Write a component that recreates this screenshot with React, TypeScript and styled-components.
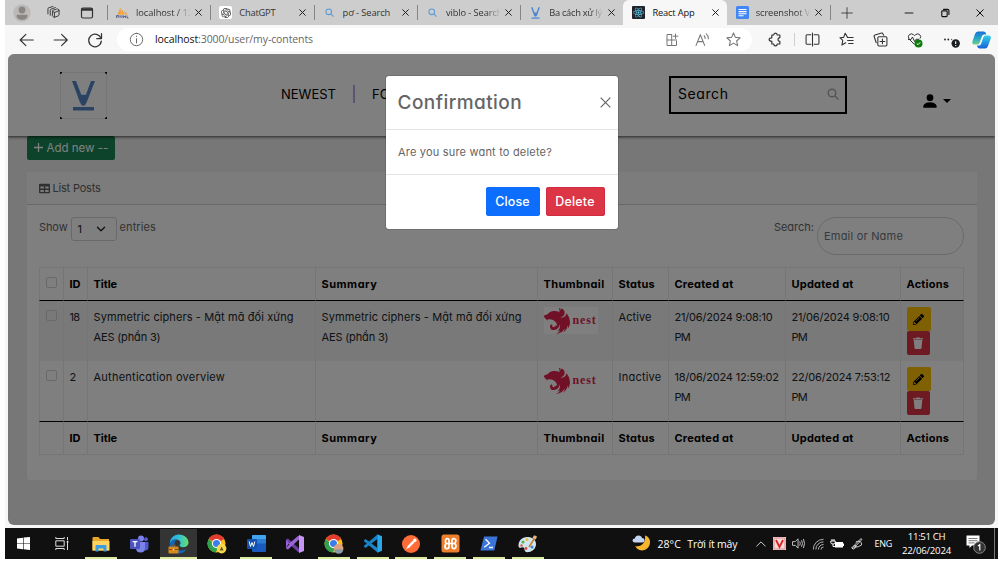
import React from 'react';
import styled, { createGlobalStyle } from 'styled-components';
import { FaTable, FaPencilAlt, FaReact } from 'react-icons/fa';
import { BsPersonFill } from 'react-icons/bs';
import { SiNestjs, SiOpenai } from 'react-icons/si';

const ui = `'Open Sans', 'Noto Sans', sans-serif`;
const body = `Inter, 'Liberation Sans', sans-serif`;

const GlobalStyle = createGlobalStyle`
  * { box-sizing: border-box; }
  body { margin: 0; background: #fff; font-family: ${body}; font-size: 11px; font-feature-settings: 'cv11'; }
  svg { display: block; flex: none; }
  button { font: inherit; border: 0; padding: 0; }
`;

const Screen = styled.div`
  width: 993px;
  height: 559px;
  margin-left: 5px;
  display: flex;
  flex-direction: column;
  background: #f7f7f7;
  overflow: hidden;
`;

const Label = styled.span<{ $ls?: number; $size?: number }>`
  letter-spacing: ${p => p.$ls ?? 0}px;
  ${p => p.$size && `font-size: ${p.$size}px;`}
  white-space: nowrap;
`;

/* ---------- Browser chrome ---------- */
const TabStrip = styled.div`
  flex: none;
  height: 25px;
  display: flex;
  background: #cdcdcd;
  font-family: ${ui};
  font-size: 9.3px;
  color: #2b2b2b;
`;
const StripTools = styled.div`
  width: 102px;
  display: grid;
  grid-template-columns: 33.5px 33px 14px;
  align-items: center;
  padding-left: 8px;
`;
const TabItem = styled.div<{ $active?: boolean; $line?: boolean }>`
  position: relative;
  width: 103.3px;
  display: flex;
  align-items: center;
  padding: 0 8px 0 9px;
  background: ${p => (p.$active ? '#f7f7f7' : 'transparent')};
  border-radius: 6px 6px 0 0;
  color: ${p => (p.$active ? '#111' : '#333')};
  &::before {
    content: '';
    position: absolute;
    left: 0;
    top: 5px;
    width: 1px;
    height: 15px;
    background: ${p => (p.$line ? '#858585' : 'transparent')};
  }
`;
const TabIcon = styled.span<{ $white?: boolean }>`
  flex: none;
  width: 13px;
  height: 13px;
  border-radius: 2px;
  display: grid;
  place-items: center;
  background: ${p => (p.$white ? '#fff' : 'transparent')};
`;
const TabTitle = styled.span<{ $ls: number; $fade?: boolean }>`
  flex: 1;
  margin: 0 3px 1px 7px;
  overflow: hidden;
  white-space: nowrap;
  letter-spacing: ${p => p.$ls}px;
  ${p => p.$fade && 'mask-image: linear-gradient(90deg, #000 72%, transparent 98%);'}
`;
const NewTab = styled.div`
  position: relative;
  display: flex;
  align-items: center;
  padding-left: 11px;
  flex: 1;
  &::before { content: ''; position: absolute; left: 0; top: 5px; width: 1px; height: 15px; background: #858585; }
`;
const WindowButtons = styled.div`
  display: flex;
  align-items: center;
  gap: 26px;
  padding-right: 14px;
`;
const Toolbar = styled.div`
  flex: none;
  height: 29px;
  display: flex;
  align-items: center;
  padding: 0 7px 0 14px;
`;
const NavButtons = styled.div`
  flex: none;
  display: flex;
  gap: 18px;
  width: 98px;
`;
const Address = styled.div`
  flex: none;
  width: 635px;
  height: 23px;
  border-radius: 12px;
  background: #fff;
  display: flex;
  align-items: center;
  padding: 0 11px 0 12px;
  gap: 16px;
  font-family: ${ui};
  font-size: 10.5px;
  color: #666;
  letter-spacing: -0.1px;
  b { font-weight: 400; color: #111; }
`;
const Url = styled.span`
  flex: 1;
  margin: 0 0 1px -5px;
`;
const ToolIcons = styled.div`
  display: grid;
  grid-template-columns: 27px 11px 34px 34px 34px 36px 29px 19px;
  align-items: center;
  padding-left: 14.5px;
`;
const Divider = styled.i`
  width: 1px;
  height: 13px;
  background: #cfcfcf;
`;

/* ---------- Web page ---------- */
const Viewport = styled.div`
  position: relative;
  flex: none;
  width: 987px;
  height: 471px;
  margin: 0 0 3px 3px;
  border-radius: 6px;
  overflow: hidden;
  background: #eee;
  color: #212529;
`;
const Navbar = styled.header`
  position: relative;
  height: 82px;
  display: flex;
  align-items: center;
  padding: 0 44px 0 52px;
  background: #fff;
  box-shadow: 0 1px 3px rgba(0, 0, 0, 0.7);
  color: #000;
  font-size: 14px;
`;
const Menu = styled.nav`
  display: flex;
  align-items: center;
  width: 388px;
  margin-left: 174px;
  padding-bottom: 2px;
`;
const MenuBar = styled.i`
  width: 2px;
  height: 18px;
  margin: 0 17px;
  background: #bda6e8;
`;
const SiteSearch = styled.div`
  width: 178px;
  height: 38px;
  border: 2px solid #000;
  display: flex;
  align-items: center;
  justify-content: space-between;
  padding: 0 6px 2px 7px;
  margin-bottom: 1px;
`;
const UserMenu = styled.div`
  flex: 1;
  display: flex;
  align-items: center;
  justify-content: flex-end;
  gap: 4px;
  padding-top: 11px;
`;
const Caret = styled.i`
  border: 4px solid transparent;
  border-top-color: #000;
  border-bottom: 0;
`;
const Content = styled.main`
  padding: 0 18.5px;
`;
const AddButton = styled.button`
  display: flex;
  align-items: center;
  gap: 4px;
  width: 88px;
  height: 24px;
  padding: 0 7px 1px;
  border-radius: 2px;
  background: #198754;
  color: #fff;
  font-size: 11.5px;
`;
const Card = styled.section`
  height: 308px;
  margin-top: 12px;
  background: #fff;
  border-radius: 3px;
`;
const CardHeader = styled.div`
  height: 33px;
  display: flex;
  align-items: center;
  gap: 3px;
  padding: 0 12px;
  background: #f8f8f8;
  border-bottom: 1px solid #d0d0d0;
  color: #606060;
`;
const CardBody = styled.div`
  padding: 12px 12.5px 0;
`;
const Controls = styled.div`
  display: flex;
  justify-content: space-between;
  height: 50px;
  color: #656565;
`;
const Control = styled.label`
  display: flex;
  align-items: flex-start;
  gap: 3px;
  line-height: 20px;
`;
const Select = styled.div`
  width: 46px;
  height: 24px;
  border: 1px solid #ced4da;
  border-radius: 3px;
  display: flex;
  align-items: center;
  justify-content: space-between;
  padding: 0 10px 0 6px;
  color: #212529;
`;
const Filter = styled.div`
  width: 147px;
  height: 38px;
  border: 1px solid #ced4da;
  border-radius: 19px;
  padding: 8px 6px;
  line-height: 20px;
  color: #6c757d;
`;
const Table = styled.table`
  width: 925px;
  table-layout: fixed;
  border-collapse: separate;
  border-spacing: 0;
  line-height: 20px;
  th, td {
    text-align: left;
    vertical-align: top;
    padding: 6px 0 0 5.5px;
    border-left: 1px solid #eaeaea;
    overflow: hidden;
  }
  th:last-child, td:last-child { border-right: 1px solid #eaeaea; }
  th { color: #000; }
`;
const HeadRow = styled.tr`
  height: 34px;
  th { border-top: 1px solid #eaeaea; border-bottom: 1px solid #000; }
`;
const Row = styled.tr<{ $striped?: boolean; $last?: boolean }>`
  height: ${p => (p.$last ? 61 : 60)}px;
  background: ${p => (p.$striped ? '#f2f2f2' : '#fff')};
  ${p => p.$last && 'td { border-bottom: 1px solid #000; }'}
`;
const FootRow = styled.tr`
  height: 33px;
  th { border-bottom: 1px solid #eaeaea; }
`;
const Check = styled.i`
  display: block;
  width: 11px;
  height: 11px;
  margin-top: 3px;
  border: 1px solid #d2d2d2;
  border-radius: 2px;
`;
const Thumb = styled.div`
  display: flex;
  align-items: center;
  gap: 3px;
  width: 54px;
  height: 27px;
  background: #fff;
  color: #e0234e;
  font: 700 12px 'Liberation Serif', serif;
`;
const ActionButton = styled.button<{ $kind: 'edit' | 'remove' }>`
  display: flex;
  align-items: center;
  justify-content: center;
  width: ${p => (p.$kind === 'edit' ? 24 : 23)}px;
  height: 24px;
  border-radius: 2px;
  background: ${p => (p.$kind === 'edit' ? '#ffc107' : '#dc3545')};
  color: ${p => (p.$kind === 'edit' ? '#000' : '#fff')};
`;

/* ---------- Dialog ---------- */
const Backdrop = styled.div`
  position: absolute;
  inset: 0;
  background: rgba(0, 0, 0, 0.5);
  display: flex;
  justify-content: center;
  align-items: flex-start;
  padding-top: 22px;
`;
const Dialog = styled.div`
  width: 232px;
  height: 152.5px;
  border-radius: 3px;
  background: #fff;
  color: #656565;
  box-shadow: 0 0 0 1px rgba(0, 0, 0, 0.12);
`;
const DialogHeader = styled.div`
  height: 54px;
  display: flex;
  align-items: center;
  justify-content: space-between;
  padding: 0 7px 0 12px;
  border-bottom: 1px solid #e2e4e6;
  font-size: 19px;
  font-weight: 500;
`;
const DialogBody = styled.div`
  height: 45px;
  display: flex;
  align-items: center;
  padding: 0 12.5px;
  border-bottom: 1px solid #e2e4e6;
`;
const DialogFooter = styled.div`
  display: flex;
  justify-content: flex-end;
  gap: 6px;
  padding: 12px 13px;
`;
const DialogButton = styled.button<{ $danger?: boolean }>`
  width: ${p => (p.$danger ? 59 : 54)}px;
  height: 29px;
  border-radius: 3px;
  color: #fff;
  font-size: 12.5px;
  font-weight: 500;
  background: ${p => (p.$danger ? '#dc3545' : '#0d6efd')};
  box-shadow: inset 0 0 0 1px ${p => (p.$danger ? '#d02c40' : '#0d6efd')};
`;

/* ---------- Taskbar ---------- */
const Taskbar = styled.footer`
  flex: none;
  height: 31px;
  display: flex;
  background: #101010;
  color: #fff;
  font-family: ${ui};
  font-size: 10px;
`;
const Apps = styled.div`
  display: flex;
  flex: none;
  margin-left: -1px;
  width: 628px;
`;
const AppSlot = styled.div<{ $running?: boolean; $active?: boolean }>`
  width: 38.8px;
  display: flex;
  flex-direction: column;
  align-items: center;
  justify-content: center;
  position: relative;
  &::before {
    content: '';
    position: absolute;
    inset: 1px 1px 0 1px;
    background: ${p => (p.$active ? '#343434' : 'transparent')};
  }
  &::after {
    content: '';
    position: absolute;
    bottom: 0;
    height: 2px;
    width: ${p => (p.$active ? 37 : 32)}px;
    background: ${p => (p.$running ? '#dcec9f' : 'transparent')};
  }
  svg { position: relative; }
`;
const Weather = styled.div`
  flex: none;
  display: flex;
  align-items: center;
  gap: 6.5px;
  width: 124px;
  font-size: 10.5px;
`;
const Tray = styled.div`
  flex: none;
  display: flex;
  align-items: center;
  gap: 6.5px;
`;
const Language = styled.div`
  flex: none;
  align-self: center;
  width: 18px;
  margin-left: 12px;
  font-size: 9px;
`;
const Clock = styled.div`
  flex: none;
  width: 50px;
  margin-left: 9px;
  font-size: 9.6px;
  line-height: 14px;
  text-align: center;
  align-self: center;
`;
const Notify = styled.div`
  flex: 1;
  display: flex;
  align-items: center;
  padding-left: 14px;
  margin-right: 3px;
  border-right: 1px solid #777;
`;

/* ---------- Drawings ---------- */
const Cross = ({ s = 7, w = 1, c = '#222' }: { s?: number; w?: number; c?: string }) => (
  <svg width={s} height={s} viewBox="0 0 10 10" stroke={c} strokeWidth={(w * 10) / s}><path d="M.6.6l8.8 8.8M9.4.6L.6 9.4" /></svg>
);
const Line = ({ d, s = 13, c = '#333', w = 1, children }: { d: string; s?: number; c?: string; w?: number; children?: React.ReactNode }) => (
  <svg width={s} height={s} viewBox="0 0 14 14" fill="none" stroke={c} strokeWidth={w} strokeLinejoin="round" strokeLinecap="round"><path d={d} />{children}</svg>
);
const SearchGlyph = ({ c, s = 11 }: { c: string; s?: number }) => (
  <svg width={s} height={s} viewBox="0 0 12 12" fill="none" stroke={c} strokeWidth="1.4"><circle cx="5" cy="5" r="3.8" /><path d="M7.8 7.8L11.4 11.4" /></svg>
);
const VibloMark = () => (
  <svg width="9" height="12" viewBox="0 0 24 31" fill="#4a86d4">
    <path d="M0 0h4l5.2 14h5.6L20 0h4l-8.4 22.5L14 25h-4l-1.6-2.5z" /><path d="M1.5 27.3h21v3.4h-21z" />
  </svg>
);
const SiteLogo = () => (
  <svg width="47" height="47" viewBox="0 0 47 47" fill="none">
    <rect x=".5" y=".5" width="46" height="46" rx="1.5" stroke="#ececec" />
    <path d="M.5 2V.5H2M45 .5h1.5V2M46.5 45v1.5H45M2 46.5H.5V45" stroke="#000" strokeWidth="1.3" />
    <path d="M12 9h4l5.3 13.8h4.6L31 9h4l-8.2 21-2 3.4h-3l-2-3.4z" fill="#5487c6" />
    <path d="M13 35h21v3.6H13z" fill="#5487c6" />
  </svg>
);
const PhpMyAdmin = () => (
  <svg width="13" height="13" viewBox="0 0 26 26"><path d="M3 17L9 3l1 14zM11 17V6l7 11zM17 9l6 8h-4z" fill="#f89c2a" /><path d="M1 24v-5h4v3H2M8 24v-5l2 2 2-2v5M15 19v5m0-3h4m0-2v5M22 19v5h3" stroke="#5a5f91" strokeWidth="1.8" fill="none" /></svg>
);
const Docs = () => (
  <svg width="13" height="13" viewBox="0 0 13 13"><rect width="13" height="13" rx="1.5" fill="#4285f4" /><path d="M2.5 3.5h8M2.5 5.6h8M2.5 7.7h8M2.5 9.8h5" stroke="#fff" strokeWidth="1.1" /></svg>
);
const Avatar = () => (
  <svg width="18" height="18" viewBox="0 0 18 18"><circle cx="9" cy="9" r="8.7" fill="#bcbab8" /><circle cx="9" cy="6" r="3.4" fill="#898684" /><path d="M3.5 11.8q0-1 1-1h9q1 0 1 1c0 2.5-2.5 4-5.5 4s-5.5-1.5-5.500-4z" fill="#898684" /></svg>
);
const Copilot = () => (
  <svg width="19" height="18" viewBox="0 0 19 18">
    <defs>
      <linearGradient id="ca" x1="0" y1="0" x2="0" y2="1"><stop stopColor="#1a6fd8" /><stop offset=".5" stopColor="#25a5c8" /><stop offset="1" stopColor="#6fd08a" /></linearGradient>
      <linearGradient id="cb" x1="0" y1="0" x2="0" y2="1"><stop stopColor="#2fd3e8" /><stop offset="1" stopColor="#1660dc" /></linearGradient>
    </defs>
    <path d="M6 .5h5.500q2 0 2.500 2l.3 1H12q-1.500 0-2 1.500L7.500 12Q7 13.500 5.500 13.500H2.300Q-.3 13.500.4 10.500L3 3Q3.800.5 6 .5z" fill="url(#ca)" />
    <path d="M13 17.500H7.800q-2 0-2.600-2l-.3-1H7q1.500 0 2-1.500L11.500 6Q12 4.500 13.500 4.500h3.200q2.700 0 2 3L16 15q-.8 2.500-3 2.500z" fill="url(#cb)" />
  </svg>
);
const Trash = () => (
  <svg width="10" height="12" viewBox="0 0 10 12" fill="currentColor"><path d="M0 1.2h3L3.500.4h3L7 1.200h3v1.200H0zM.7 3h8.600l-.8 8q-.1.900-1 .9H2.500q-.9 0-1-.9z" /></svg>
);

const FolderIcon = () => (
  <svg width="18" height="16" viewBox="0 0 18 16"><path d="M.5 2Q.5 1 1.500 1h5l1.500 2h9v11.500H.5z" fill="#e9a72c" /><path d="M.5 5h17v9.500H.5z" fill="#ffd562" /><path d="M3.500 15.500V10q0-1 1-1h9q1 0 1 1v5.500h-3V12.500h-5v3z" fill="#3d9be0" /></svg>
);
const TeamsIcon = () => (
  <svg width="19" height="18" viewBox="0 0 19 18"><circle cx="11" cy="3.600" r="3" fill="#7b83eb" /><circle cx="16" cy="4.300" r="2" fill="#5059c9" /><path d="M12 7h6.500v5q0 3.500-3.500 3.500h-3z" fill="#5059c9" /><path d="M6 7h9v6q0 4.500-4.500 4.500T6 13z" fill="#7b83eb" /><rect y="4" width="10" height="10" rx="1" fill="#4b53bc" /><path d="M2.600 6.700h4.800M5 6.700v5" stroke="#fff" strokeWidth="1.300" /></svg>
);
const EdgeIcon = () => (
  <svg width="21" height="20" viewBox="0 0 21 20">
    <defs><linearGradient id="eg" x1="0" x2="1"><stop stopColor="#1fa4e8" /><stop offset=".5" stopColor="#35c1d8" /><stop offset="1" stopColor="#67e060" /></linearGradient></defs>
    <path d="M2 11C1 5 5.500.5 11 .5s9.500 4 9.500 8c0 3-2.500 4.700-5.500 4.700-2.500 0-3.500-1-3.500-1.700s1-1 1-2.500c0-2-2-3.500-4.500-3.500C4.500 5.500 2 8 2 11z" fill="url(#eg)" />
    <path d="M2 9.500C3 6.500 6 5.600 8.500 6 6.500 7.500 6 10 7 12.500c1.200 3 5 5 9.500 3.200 1.200-.5 1.500.2 1 .8-2 2.500-5 3.200-7 3C5 19 1 14.500 2 9.500z" fill="#1467b8" />
    <rect x=".5" y="12.500" width="10" height="7" rx="1" fill="#d88918" /><path d="M3.500 12.500v-1.300h4v1.300M.5 15.500h10" stroke="#8a4f08" fill="none" /><path d="M4.700 14.800h1.600v1.500H4.700z" fill="#ffe090" />
  </svg>
);
const ChromeIcon = ({ badge }: { badge: 'gold' | 'face' }) => (
  <svg width="20" height="20" viewBox="0 0 20 20">
    <circle cx="9.500" cy="9.500" r="9" fill="#fbc116" />
    <path d="M9.500 9.500L1.700 5A9 9 0 0117.300 5z" fill="#e33b2e" /><path d="M1.700 5a9 9 0 006.800 13.500l3-5z" fill="#30a14e" />
    <circle cx="9.500" cy="9.500" r="4.600" fill="#fff" /><circle cx="9.500" cy="9.500" r="3.500" fill="#3b7ded" />
    {badge === 'gold'
      ? <><circle cx="14.600" cy="14.600" r="4.800" fill="#f6d84c" /><path d="M12.600 16.500l2-4 2 4z" fill="#6b5420" /></>
      : <><circle cx="14.600" cy="14.600" r="4.800" fill="#e0a27e" /><path d="M10 16q4.500-2 9.300 0a4.800 4.800 0 01-9.300 0z" fill="#8b9aa6" /></>}
  </svg>
);
const WordIcon = () => (
  <svg width="19" height="17" viewBox="0 0 19 17"><rect x="5" width="14" height="17" rx="1" fill="#185abd" /><path d="M5 1q0-1 1-1h12q1 0 1 1v3.500H5z" fill="#41a5ee" /><path d="M5 4.500h14v4H5z" fill="#2b7cd3" /><rect y="4" width="10" height="10" rx="1" fill="#1550ac" /><path d="M2.200 6.500l1.300 5L5 7.500l1.500 4 1.300-5" stroke="#fff" fill="none" /></svg>
);
const VisualStudioIcon = () => (
  <svg width="20" height="18" viewBox="0 0 20 18"><path d="M1 4.500L3 3.500 14.500 14v3.500L13 17 1 6z" fill="#6b3fa5" /><path d="M1 13.500V4.500l3.500 4.500L1 13.500l2 1L14.500 4V.5L13 1 3 9.500z" fill="#9a66d6" /><path d="M14 0l5 2v14l-5 2z" fill="#c596f5" /></svg>
);
const VSCodeIcon = () => (
  <svg width="20" height="19" viewBox="0 0 20 19"><path d="M1 6.200L2.500 5 14.500 14v4.500L1 7.200z" fill="#1b85c7" /><path d="M1 12.800L2.500 14 14.500 5V.5L1 11.800z" fill="#1583c6" /><path d="M14.300.3L19 2.300v14.400l-4.700 2z" fill="#28a9ee" /></svg>
);
const PowerShellIcon = () => (
  <svg width="18" height="15" viewBox="0 0 18 15"><path d="M4 .5h13.500l-3.200 14H.5z" fill="#3b74d8" /><path d="M5.500 3.200l4 4-5.300 4M9 11.500h4" stroke="#fff" strokeWidth="1.300" fill="none" /></svg>
);
const PaintIcon = () => (
  <svg width="20" height="18" viewBox="0 0 20 18"><path d="M9 2C4 2 .5 6 .5 10.500c0 2.500 1.500 2.500 3 2s3 0 3 2 1.500 3 4.500 2.500c4-.6 7-4 7-8C18 4.500 14 2 9 2z" fill="#cfe6f2" /><circle cx="5" cy="7" r="1.500" fill="#58b052" /><circle cx="9" cy="4.500" r="1.500" fill="#e9bd35" /><circle cx="8" cy="13.500" r="1.400" fill="#e04a3a" /><circle cx="3.500" cy="10.500" r="1.200" fill="#e5583b" /><path d="M18 1L11 12" stroke="#c9822d" strokeWidth="1.600" /><path d="M14.500 3L16 .2l3 1.600-1.300 2.700z" fill="#e8b677" /><circle cx="14" cy="12" r="1.500" fill="#3b82cf" /></svg>
);
const PostmanIcon = () => (
  <svg width="18" height="18" viewBox="0 0 18 18"><circle cx="9" cy="9" r="9" fill="#ff6c37" /><path d="M4 14.300l2-3.800L11 5.500l1.700 1.700-5 5z" fill="#fff" /><circle cx="12.800" cy="5.300" r="1.700" fill="#fff" /></svg>
);
const XamppIcon = () => (
  <svg width="19" height="19" viewBox="0 0 19 19"><rect x=".5" y=".5" width="18" height="18" rx="2.500" fill="#ee7f2d" /><path d="M5.500 4.700q2-.6 2.500 1.300v7q-.3 1.900-2.300 1.600T4 12q0-2.300 2.300-2.500h6.400Q15 9.700 15 12t-1.700 2.600T11 13V6q.5-1.900 2.500-1.300T14.600 8q-.5 1.500-2 1.500H6.400q-1.500 0-2-1.500T5.500 4.700z" fill="none" stroke="#fff" strokeWidth="1.700" /></svg>
);
const MoonIcon = () => (
  <svg width="19" height="19" viewBox="0 0 19 19"><path d="M13 1.500c4 1 6 5 4.700 9-1.300 4.500-6 7-10.200 5.500-2-.7-3.500-2-4.200-4C9 13.500 14 9 13 1.500z" fill="#f7b52d" /><path d="M3 8.500q-2.500 0-2.500-2t2.300-2Q3.500 1.500 6.500 1.500t3.500 2.500q2.500 0 2.500 2.200t-2.500 2.300z" fill="#c4d5f3" /></svg>
);

/* ---------- Data ---------- */
const tabs = [
  { t: 'localhost / 12', ls: -0.05, fade: true, icon: <PhpMyAdmin />, line: true },
  { t: 'ChatGPT', ls: -0.2, icon: <SiOpenai size={10} color="#333" />, white: true, line: true },
  { t: 'pơ - Search', ls: -0.1, icon: <SearchGlyph c="#5b9bd8" s={9} />, line: true },
  { t: 'viblo - Search', ls: -0.1, fade: true, icon: <SearchGlyph c="#5b9bd8" s={9} />, line: true },
  { t: 'Ba cách xử lý', ls: -0.28, fade: true, icon: <VibloMark />, line: true },
  { t: 'React App', ls: -0.18, icon: <svg width="13" height="13" viewBox="0 0 13 13"><rect width="13" height="13" rx="1" fill="#20232a" /><FaReact x="1" y="1" size={11} color="#61dafb" /></svg>, active: true },
  { t: 'screenshot Vi', ls: -0.12, fade: true, icon: <Docs /> },
];
const widths = [24, 24, 228, 222, 75, 56, 117, 115, 64];
const heads: [string, number][] = [['ID', 0], ['Title', -0.08], ['Summary', 0.5], ['Thumbnail', 0.36], ['Status', 0.23], ['Created at', 0.22], ['Updated at', 0.22], ['Actions', 0.19]];
const posts = [
  { id: '18', title: ['Symmetric ciphers - Mật mã đối xứng', 'AES (phần 3)'], ls: 0.1, copy: true, status: 'Active', sls: 0.08, created: '21/06/2024 9:08:10', updated: '21/06/2024 9:08:10' },
  { id: '2', title: ['Authentication overview'], ls: 0.24, copy: false, status: 'Inactive', sls: 0.23, created: '18/06/2024 12:59:02', updated: '22/06/2024 7:53:12' },
];

const Lines = ({ lines, ls }: { lines: string[]; ls: number }) => (
  <>{lines.map((l, i) => <div key={l}><Label $ls={i ? -0.15 : ls}>{l}</Label></div>)}</>
);

export default function App() {
  return (
    <>
      <GlobalStyle />
      <Screen>
        <TabStrip>
          <StripTools>
            <Avatar />
            <Line d="M6 5.500q0-.8.8-1l3.700-1.300q.8-.2 1.500.3l1 .8v5.200q0 .7-.7 1L8.500 12q-.7.300-1.300-.2L6 10.800zM6 5.500l2 1.500 5-2M8 7v5M3.500 10V4.500q0-.7.7-1L9 1.700M1 8.500V3q0-.7.700-1L6.500.5" />
            <Line s={14} w={1.2} d="M1.500 3.500q0-1.500 1.500-1.500h8q1.500 0 1.500 1.500v7q0 1.500-1.500 1.500H3q-1.500 0-1.500-1.500z"><path d="M2.300 3.500h9.400" strokeWidth="2.600" /></Line>
          </StripTools>
          {tabs.map(t => (
            <TabItem key={t.t} $active={t.active} $line={t.line}>
              <TabIcon $white={t.white}>{t.icon}</TabIcon>
              <TabTitle $ls={t.ls} $fade={t.fade}>{t.t}</TabTitle>
              <Cross />
            </TabItem>
          ))}
          <NewTab><Line s={12} d="M7 .8v12.400M.8 7h12.400" /></NewTab>
          <WindowButtons>
            <Line s={10} w={1.3} c="#111" d="M1.500 7h11" />
            <Line s={10} w={1.6} c="#111" d="M2.500 5q0-1 1-1h5.500q1 0 1 1v6q0 1-1 1h-5.500q-1 0-1-1zM5 2h5.500q2 0 2 2v5" />
            <Cross s={8} c="#111" />
          </WindowButtons>
        </TabStrip>
        <Toolbar>
          <NavButtons>
            <Line s={16} d="M12.500 7H1M6 2L1 7l5 5" />
            <Line s={16} d="M1 7h11.500M7.500 2l5 5-5 5" />
            <Line s={16} w={1.1} d="M12.200 5.500A5.500 5.500 0 1012.500 8M12.700 1.500v4.200H8.500" />
          </NavButtons>
          <Address>
            <Line s={15} c="#666" w={0.9} d="M7 1.200a5.800 5.800 0 100 11.600A5.800 5.800 0 107 1.200M7 6.200v4M7 3.800v.4" />
            <Url><b>localhost</b>:3000/user/my-contents</Url>
            <Line c="#777" s={14} d="M6.500 1.500H2v11h9.500V8M2 7h9.500M6.700 1.500v11M10.500 1v4.500M8.200 3.200h4.600" />
            <Line c="#777" s={15} d="M1 12.500L5 2.500l4 10M2.500 9h5M8.500 3.500q1 .8 1 2.500M10.500 1.800q2 1.500 2 4.500" />
            <Line c="#777" s={15} d="M7 1l1.800 4 4.400.4-3.300 3 1 4.300L7 10.400l-3.900 2.300 1-4.300-3.300-3L5.200 5z" />
          </Address>
          <ToolIcons>
            <Line s={15} d="M4.500 2.800h1.800q0-1.800 1.600-1.800t1.600 1.800h2.500v2.400q-1.800.2-1.800 1.800t1.800 1.800v2.400H9.500q0 1.800-1.600 1.800t-1.600-1.800H4.500V8.600Q2 8.600 2 7t2.500-1.600z" w={1.1} />
            <Divider />
            <Line s={15} d="M5.500 2.500H2q-1 0-1 1v7q0 1 1 1h3.500M8.500 2.500H12q1 0 1 1v7q0 1-1 1H8.500M7 1v12" />
            <Line s={15} d="M8 5L5.800 1.200 4.300 5 .8 5.300l2.700 2.600-.8 4.300 3.600-2.200M8 5.200h5.200M8 8h5.200M9 10.800h4.200" />
            <Line s={15} d="M5.500 4.500H12q1 0 1 1V12q0 1-1 1H5.500q-1 0-1-1V5.500q0-1 1-1zM8.800 6.500v4.500M6.500 8.800H11M3 10L1 4q-.2-1 .8-1.300L8 1q1-.2 1.300.8L10 3" />
            <svg width="16" height="16" viewBox="0 0 16 16" fill="none" stroke="#333"><path d="M7.500 12.500L2 7q-1.500-2.500.3-4.300t4.200 0l1 .9 1-.9q2.300-1.800 4.200 0T13 6.500M1 7.500h3L5.500 5l2 4.500L9 7.300h3" /><circle cx="11.500" cy="11.500" r="4" fill="#0f7b0f" stroke="none" /><path d="M9.800 11.500l1.200 1.200 2.200-2.300" stroke="#fff" /></svg>
            <svg width="17" height="16" viewBox="0 0 17 16"><circle cx="2" cy="7.500" r=".9" fill="#222" /><circle cx="5.300" cy="7.500" r=".9" fill="#222" /><circle cx="8.600" cy="7.500" r=".7" fill="#666" /><circle cx="12.700" cy="11.500" r="4.200" fill="#1b1f23" /><path d="M12.700 9.300v2.800M12.700 13v1" stroke="#fff" strokeWidth="1.100" /></svg>
            <Copilot />
          </ToolIcons>
        </Toolbar>

        <Viewport>
          <Navbar>
            <SiteLogo />
            <Menu>
              <Label $size={13}>NEWEST</Label>
              <MenuBar />
              <Label $size={13}>FO</Label>
            </Menu>
            <SiteSearch><Label $ls={0.58}>Search</Label><SearchGlyph c="#aaa" s={12} /></SiteSearch>
            <UserMenu><BsPersonFill size={18} /><Caret /></UserMenu>
          </Navbar>
          <Content>
            <AddButton><svg width="9" height="9" viewBox="0 0 9 9" stroke="#fff" strokeWidth="1.300"><path d="M4.500 0v9M0 4.500h9" /></svg><Label>Add new --</Label></AddButton>
            <Card>
              <CardHeader><FaTable size={11} /><Label $ls={-0.2}>List Posts</Label></CardHeader>
              <CardBody>
                <Controls>
                  <Control>
                    <Label $ls={-0.1}>Show</Label>
                    <Select>1<Line s={10} w={1.8} c="#222" d="M2 4.500l5 5 5-5" /></Select>
                    <Label $ls={0.1}>entries</Label>
                  </Control>
                  <Control>
                    <Label>Search:</Label>
                    <Filter><Label $ls={0.21}>Email or Name</Label></Filter>
                  </Control>
                </Controls>
                <Table>
                  <colgroup>{widths.map((w, i) => <col key={i} width={w} />)}</colgroup>
                  <thead>
                    <HeadRow><th><Check /></th>{heads.map(([h, ls]) => <th key={h}><Label $ls={ls}>{h}</Label></th>)}</HeadRow>
                  </thead>
                  <tbody>
                    {posts.map((p, i) => (
                      <Row key={p.id} $striped={i === 0} $last={i === 1}>
                        <td><Check /></td>
                        <td><Label $ls={p.id === '18' ? -0.6 : 0}>{p.id}</Label></td>
                        <td><Lines lines={p.title} ls={p.ls} /></td>
                        <td>{p.copy && <Lines lines={p.title} ls={p.ls} />}</td>
                        <td><Thumb><SiNestjs size={26} /><Label $ls={0.9}>nest</Label></Thumb></td>
                        <td><Label $ls={p.sls}>{p.status}</Label></td>
                        <td><Label $ls={-0.2}>{p.created}</Label><br /><Label $ls={-0.7}>PM</Label></td>
                        <td><Label $ls={-0.2}>{p.updated}</Label><br /><Label $ls={-0.7}>PM</Label></td>
                        <td>
                          <ActionButton $kind="edit"><FaPencilAlt size={11} /></ActionButton>
                          <ActionButton $kind="remove"><Trash /></ActionButton>
                        </td>
                      </Row>
                    ))}
                  </tbody>
                  <tfoot>
                    <FootRow><th />{heads.map(([h, ls]) => <th key={h}><Label $ls={ls}>{h}</Label></th>)}</FootRow>
                  </tfoot>
                </Table>
              </CardBody>
            </Card>
          </Content>
          <Backdrop>
            <Dialog role="dialog">
              <DialogHeader><Label $ls={0.45}>Confirmation</Label><Cross s={11} c="#666" w={1.2} /></DialogHeader>
              <DialogBody><Label $ls={0.19}>Are you sure want to delete?</Label></DialogBody>
              <DialogFooter>
                <DialogButton><Label $ls={0.1}>Close</Label></DialogButton>
                <DialogButton $danger><Label $ls={0.19}>Delete</Label></DialogButton>
              </DialogFooter>
            </Dialog>
          </Backdrop>
        </Viewport>

        <Taskbar>
          <Apps>
            <AppSlot><svg width="13" height="13" viewBox="0 0 13 13" fill="#fff"><path d="M0 1.500l6-.8v5.500H0zM6.600.6L13 0v6.200H6.600zM0 6.800h6v5.500l-6-.8zM6.600 6.800H13V13l-6.400-.7z" /></svg></AppSlot>
            <AppSlot><svg width="14" height="13" viewBox="0 0 14 13" fill="none" stroke="#ddd"><path d="M.8 0v1.500h8.400V0M.8 3.800h8.400v5.400H.8zM.8 13v-1.500h8.400V13M12.500 0v3M12.500 6v7" /><path d="M11.800 3.800h1.500v2h-1.500z" fill="#fff" stroke="none" /></svg></AppSlot>
            <AppSlot $running><FolderIcon /></AppSlot>
            <AppSlot><TeamsIcon /></AppSlot>
            <AppSlot $running $active><EdgeIcon /></AppSlot>
            <AppSlot><ChromeIcon badge="gold" /></AppSlot>
            <AppSlot $running><WordIcon /></AppSlot>
            <AppSlot><VisualStudioIcon /></AppSlot>
            <AppSlot $running><ChromeIcon badge="face" /></AppSlot>
            <AppSlot $running><VSCodeIcon /></AppSlot>
            <AppSlot $running><PostmanIcon /></AppSlot>
            <AppSlot $running><XamppIcon /></AppSlot>
            <AppSlot $running><PowerShellIcon /></AppSlot>
            <AppSlot $running><PaintIcon /></AppSlot>
          </Apps>
          <Weather><MoonIcon /><Label $ls={0.05}>28°C</Label><Label $ls={-0.16}>Trời ít mây</Label></Weather>
          <Tray>
            <Line s={10} c="#ddd" w={1.3} d="M1 10l6-6 6 6" />
            <svg width="13" height="13" viewBox="0 0 13 13"><rect width="13" height="13" fill="#f3dcdc" /><path d="M1 1h11v11H1z" fill="none" stroke="#d88" /><path d="M3 3l3.500 7L10 3" fill="none" stroke="#d22" strokeWidth="1.800" /></svg>
            <Line s={13} c="#ccc" d="M1 5h2.500L6.500 2v10L3.500 9H1zM8.500 5.200q1 1.800 0 3.600M10.500 3.800q1.700 3.200 0 6.400M12.500 2.500q2.200 4.500 0 9" />
            <Line s={12} c="#ccc" d="M1.500 13A11.500 11.500 0 0113 1.500M4.500 13A8.500 8.500 0 0113 4.500M7.500 13A5.500 5.500 0 0113 7.500M10.500 13A2.500 2.500 0 0113 10.500" />
            <svg width="14" height="10" viewBox="0 0 14 10"><path d="M5 3h8v5.500H5zM13 4.500h1v2.500h-1z" fill="#fff" /><path d="M2 0v2M4 0v2M.8 2h4.400v1.500q0 1.500-2.200 1.500T.8 3.500zM3 5v2.500H5" stroke="#fff" fill="none" /></svg>
            <Line s={12} c="#ddd" w={1.1} d="M4 11L12 2.500q1-1 .3-1.500t-1.500.4L3 9.500zM1 11.500q2-3 4-2.500T4.500 12 1 11.500M6 4.500q4-2 6 1t-3 4.500-4-1" />
          </Tray>
          <Language><Label $ls={-0.3}>ENG</Label></Language>
          <Clock><Label $ls={-0.35}>11:51 CH</Label><br /><Label $ls={-0.2}>22/06/2024</Label></Clock>
          <Notify>
            <svg width="20" height="20" viewBox="0 0 20 20"><path d="M.5 1.500h13v10H6L3.500 14v-2.500h-3z" fill="#fff" /><path d="M2.500 4.500h9M2.500 6.700h9M2.500 8.900h6" stroke="#555" strokeWidth=".8" /><circle cx="13.500" cy="13.500" r="5.800" fill="#333" stroke="#888" /><path d="M12 12l1.800-1.300v5.800" stroke="#fff" strokeWidth="1.200" fill="none" /></svg>
          </Notify>
        </Taskbar>
      </Screen>
    </>
  );
}
